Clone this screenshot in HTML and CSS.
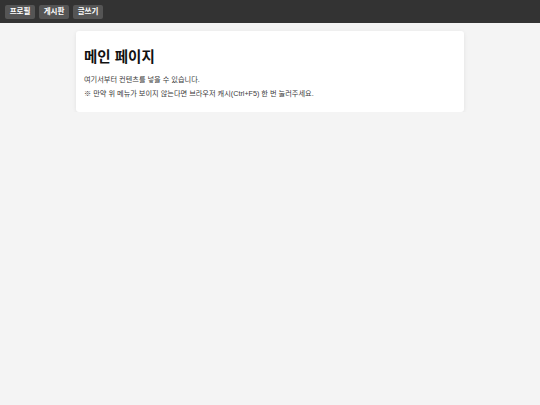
FILE: index.html
```html
<!DOCTYPE html>
<html lang="ko">
<head>
<meta charset="utf-8">
<title>메인 페이지</title>
<link rel="stylesheet" href="styles.css">
</head>
<body>
<nav class="topnav">
  <a class="nav-btn" href="#">프로필</a>
  <a class="nav-btn" href="#">게시판</a>
  <a class="nav-btn" href="#">글쓰기</a>
</nav>
<main class="card">
  <h1 class="title">메인 페이지</h1>
  <p class="text">여기서부터 컨텐츠를 넣을 수 있습니다.</p>
  <p class="text">※ 만약 위 메뉴가 보이지 않는다면 브라우저 캐시(Ctrl+F5) 한 번 눌러주세요.</p>
</main>
</body>
</html>
```
FILE: styles.css
```css
html, body {
  margin: 0;
  padding: 0;
}
body {
  background: #f4f4f4;
  font-family: "Liberation Sans", "Noto Sans CJK KR", sans-serif;
  color: #222;
}
.topnav {
  background: #333;
  height: 23px;
  box-sizing: border-box;
  padding: 5px 5px 0;
  display: flex;
  gap: 4px;
  align-items: flex-start;
}
.nav-btn {
  display: block;
  width: 30px;
  text-align: center;
  background: #555;
  color: #fff;
  text-decoration: none;
  font-size: 7.5px;
  font-weight: bold;
  line-height: 14px;
  height: 14px;
  border-radius: 2px;
}
.card {
  display: block;
  width: 388px;
  box-sizing: border-box;
  margin: 8px auto 0;
  background: #fff;
  border-radius: 3px;
  box-shadow: 0 1px 4px rgba(0,0,0,0.08);
  padding: 16px 8px 13px;
}
.title {
  margin: 0 0 8px;
  font-size: 14.5px;
  line-height: 20px;
  font-weight: bold;
  color: #111;
}
.text {
  margin: 0 0 4px;
  font-size: 7.2px;
  line-height: 10px;
  color: #3a3a3a;
}
.text:last-child {
  margin-bottom: 0;
}
```
